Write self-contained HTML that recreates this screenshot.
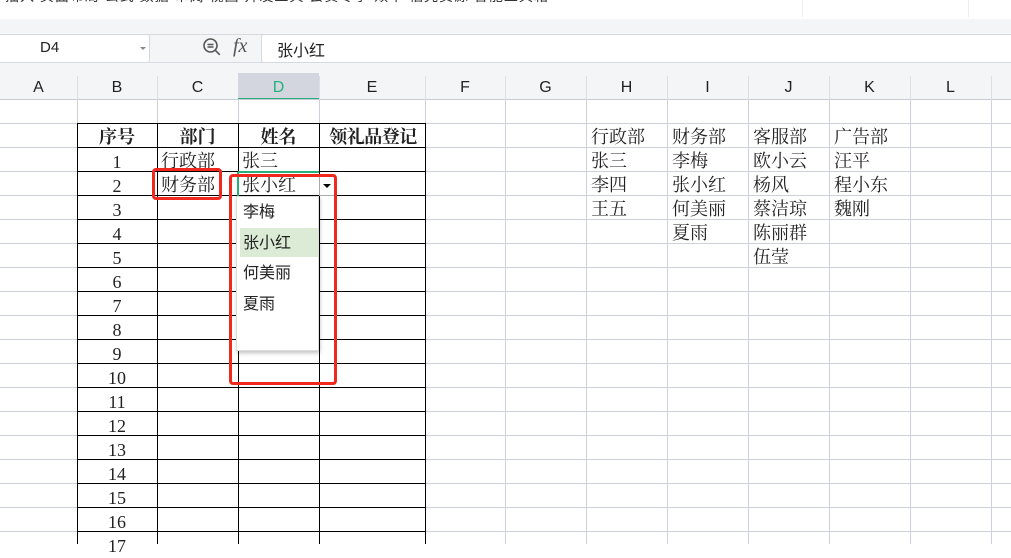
<!DOCTYPE html><html><head><meta charset="utf-8"><style>
body{margin:0;width:1011px;height:544px;overflow:hidden;position:relative;background:#fff;font-family:"Liberation Sans","Noto Sans CJK SC",sans-serif}
.a{position:absolute}
.s{font-family:"Liberation Serif","Noto Serif CJK SC",serif;font-size:18px;color:#222;line-height:24px}
.v{position:absolute;top:100px;bottom:0;width:1px;background:#cdd1de}
.bv{position:absolute;top:124px;bottom:0;width:1px;background:#000}
.ch{position:absolute;top:73px;height:27px;line-height:29px;text-align:center;font-size:16px;color:#222}
.chs{position:absolute;top:76px;height:24px;width:1px;background:#dcdee4}
</style></head><body>
<div class="a" style="left:0;top:0;width:1011px;height:19px;background:#fff;box-shadow:0 1px 3px rgba(0,0,0,.08)"></div>
<div class="a" style="left:5px;top:-14px;font-size:14px;color:#333;letter-spacing:1px;white-space:nowrap">插入 页面布局 公式 数据 审阅 视图 开发工具 会员专享 效率 稻壳资源 智能工具箱</div>
<div class="a" style="left:802px;top:0;width:1px;height:17px;background:#eee"></div>
<div class="a" style="left:968px;top:0;width:1px;height:17px;background:#eee"></div>
<div class="a" style="left:0;top:19px;width:1011px;height:81px;background:#f4f5f7"></div>
<div class="a" style="left:0;top:34px;width:1011px;height:1px;background:#d6d9e0"></div>
<div class="a" style="left:0;top:34px;width:149px;height:27px;background:#fff;border:1px solid #d6d9e0;border-left:none;border-radius:0 3px 3px 0"></div>
<div class="a" style="left:40px;top:39px;font-size:15px;color:#222">D4</div>
<div class="a" style="left:140px;top:47px;border:3px solid transparent;border-top:3px solid #888"></div>
<svg class="a" style="left:202px;top:37px" width="20" height="20" viewBox="0 0 20 20"><circle cx="8.5" cy="8.5" r="6.5" fill="none" stroke="#555" stroke-width="1.6"/><path d="M5.5 7.5h6M5.5 10h6M13.3 13.3l4.5 4.5" stroke="#555" stroke-width="1.6"/></svg>
<div class="a" style="left:233px;top:35px;font-family:'Liberation Serif',serif;font-style:italic;font-size:20px;color:#555">fx</div>
<div class="a" style="left:261px;top:34px;width:760px;height:27px;background:#fff;border:1px solid #d6d9e0;border-radius:3px"></div>
<div class="a" style="left:277px;top:37px;font-size:16px;color:#222">张小红</div>
<div class="a" style="left:0;top:62px;width:1011px;height:1px;background:#d6d9e0"></div>
<div class="a" style="left:238px;top:73px;width:81px;height:27px;background:#d3d6de"></div>
<div class="a" style="left:238px;top:98px;width:81px;height:2px;background:#27b07a"></div>
<div class="a" style="left:0;top:99px;width:1011px;height:1px;background:#c6cad6"></div>
<div class="chs" style="left:77px"></div><div class="chs" style="left:157px"></div><div class="chs" style="left:319px"></div><div class="chs" style="left:425px"></div><div class="chs" style="left:505px"></div><div class="chs" style="left:586px"></div><div class="chs" style="left:667px"></div><div class="chs" style="left:748px"></div><div class="chs" style="left:829px"></div><div class="chs" style="left:910px"></div><div class="chs" style="left:991px"></div>
<div class="ch" style="left:0;width:77px">A</div><div class="ch" style="left:77px;width:80px">B</div><div class="ch" style="left:157px;width:81px">C</div><div class="ch" style="left:238px;width:81px;color:#27b07a">D</div><div class="ch" style="left:319px;width:106px">E</div><div class="ch" style="left:425px;width:80px">F</div><div class="ch" style="left:505px;width:81px">G</div><div class="ch" style="left:586px;width:81px">H</div><div class="ch" style="left:667px;width:81px">I</div><div class="ch" style="left:748px;width:81px">J</div><div class="ch" style="left:829px;width:81px">K</div><div class="ch" style="left:910px;width:81px">L</div>
<div class="a" style="left:0;top:100px;width:1011px;height:444px;background:repeating-linear-gradient(to bottom,transparent 0,transparent 23px,#cdd1de 23px,#cdd1de 24px)"></div>
<div class="v" style="left:77px"></div><div class="v" style="left:157px"></div><div class="v" style="left:238px"></div><div class="v" style="left:319px"></div><div class="v" style="left:425px"></div><div class="v" style="left:505px"></div><div class="v" style="left:586px"></div><div class="v" style="left:667px"></div><div class="v" style="left:748px"></div><div class="v" style="left:829px"></div><div class="v" style="left:910px"></div><div class="v" style="left:991px"></div>
<div class="a" style="left:77px;top:123px;width:349px;height:421px;background:repeating-linear-gradient(to bottom,#000 0,#000 1px,transparent 1px,transparent 24px)"></div>
<div class="bv" style="left:77px"></div><div class="bv" style="left:157px"></div><div class="bv" style="left:238px"></div><div class="bv" style="left:319px"></div><div class="bv" style="left:425px"></div>
<div class="a s" style="left:77px;top:125px;width:80px;text-align:center;font-weight:bold">序号</div>
<div class="a s" style="left:157px;top:125px;width:81px;text-align:center;font-weight:bold">部门</div>
<div class="a s" style="left:238px;top:125px;width:81px;text-align:center;font-weight:bold">姓名</div>
<div class="a s" style="left:320px;top:125px;width:106px;text-align:center;font-weight:bold;white-space:nowrap;letter-spacing:-0.5px">领礼品登记</div>
<div class="a s" style="left:77px;top:150px;width:80px;text-align:center">1<br>2<br>3<br>4<br>5<br>6<br>7<br>8<br>9<br>10<br>11<br>12<br>13<br>14<br>15<br>16<br>17</div>
<div class="a s" style="left:161px;top:149px">行政部<br>财务部</div>
<div class="a s" style="left:242px;top:149px">张三<br>张小红</div>
<div class="a s" style="left:591px;top:125px">行政部<br>张三<br>李四<br>王五</div>
<div class="a s" style="left:672px;top:125px">财务部<br>李梅<br>张小红<br>何美丽<br>夏雨</div>
<div class="a s" style="left:753px;top:125px">客服部<br>欧小云<br>杨风<br>蔡洁琼<br>陈丽群<br>伍莹</div>
<div class="a s" style="left:834px;top:125px">广告部<br>汪平<br>程小东<br>魏刚</div>
<div class="a" style="left:238px;top:171px;width:81px;height:2px;background:#27b07a"></div>
<div class="a" style="left:237px;top:172px;width:2px;height:25px;background:#27b07a"></div>
<div class="a" style="left:319px;top:175px;width:16px;height:21px;background:#fff;border:1px solid #aaa;box-sizing:border-box"></div>
<div class="a" style="left:323px;top:184px;border:4px solid transparent;border-top:4px solid #000"></div>
<div class="a" style="left:236px;top:196px;width:83px;height:155px;background:#fff;box-shadow:1px 2px 4px rgba(0,0,0,.25);border:1px solid #ddd;box-sizing:border-box"></div>
<div class="a" style="left:240px;top:228px;width:78px;height:29px;background:#dcebd5"></div>
<div class="a" style="left:243px;top:198px;font-size:16px;line-height:30.6px;color:#222">李梅<br>张小红<br>何美丽<br>夏雨</div>
<div class="a" style="left:152px;top:168px;width:70px;height:32px;border:3px solid #f0281e;border-radius:4px;box-sizing:border-box"></div>
<div class="a" style="left:229px;top:174px;width:108px;height:211px;border:3px solid #f0281e;border-radius:4px;box-sizing:border-box"></div>
</body></html>
